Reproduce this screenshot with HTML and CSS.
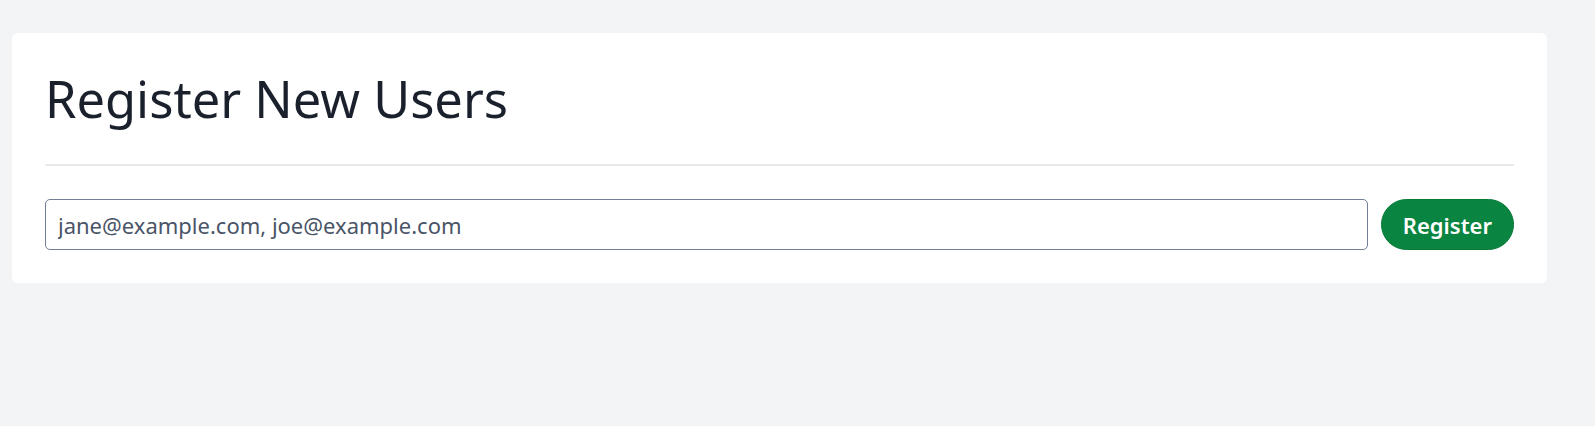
FILE: index.html
```html
<!DOCTYPE html>
<html lang="en">
<head>
<meta charset="utf-8">
<title>Register New Users</title>
<link rel="stylesheet" href="styles.css">
</head>
<body>
<main class="page">
  <section class="card">
    <h1 class="card-title">Register New Users</h1>
    <hr class="divider">
    <form class="register-form">
      <input class="email-input" type="text" placeholder="jane@example.com, joe@example.com">
      <button class="register-btn" type="button">Register</button>
    </form>
  </section>
</main>
</body>
</html>
```

FILE: styles.css
```css
html, body {
  margin: 0;
  padding: 0;
  background: #f3f4f6;
  font-family: "Noto Sans", "Open Sans", sans-serif;
  color: #1a202c;
}

.page {
  padding: 33px 48px 0 12px;
}

.card {
  background: #ffffff;
  border-radius: 6px;
  padding: 33px 33px 33px 33px;
}

.card-title {
  margin: 0;
  font-size: 50.6px;
  line-height: 65px;
  font-weight: 400;
  color: #1a202c;
}

.divider {
  border: 0;
  border-top: 2px solid #e8eaee;
  margin: 33px 0 33px 0;
}

.register-form {
  display: flex;
  align-items: center;
  gap: 13px;
}

.email-input {
  flex: 1;
  height: 51px;
  box-sizing: border-box;
  border: 1px solid #718096;
  border-radius: 5px;
  padding: 0 12px;
  font-family: "Noto Sans", sans-serif;
  font-size: 22px;
  color: #1a202c;
  background: #fff;
  outline: none;
}

.email-input::placeholder {
  color: #4a5568;
  opacity: 1;
}

.register-btn {
  height: 51px;
  box-sizing: border-box;
  border: 1px solid #067a36;
  border-radius: 999px;
  background: #0a8541;
  color: #ffffff;
  font-family: "Noto Sans", sans-serif;
  font-size: 22px;
  font-weight: 600;
  padding: 0 21px;
  cursor: pointer;
}
```
